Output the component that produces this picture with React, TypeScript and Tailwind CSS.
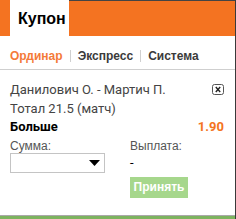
import React from "react";

const sans = "font-['Liberation_Sans',Arial,sans-serif]";
const roboto = "font-['Roboto','Liberation_Sans',sans-serif]";

function CloseIcon() {
  return (
    <svg width="12" height="11" viewBox="0 0 12 11" aria-label="Удалить">
      <rect x="0.5" y="0.5" width="11" height="10" rx="2" fill="none" stroke="#555" strokeWidth="1" />
      <path d="M3.8 3 L8.2 8 M8.2 3 L3.8 8" stroke="#222" strokeWidth="1.4" />
    </svg>
  );
}

function Tab({ label, active }: { label: string; active?: boolean }) {
  return (
    <span className={active ? "text-[#f47a38]" : "text-[#3b3b3b]"}>{label}</span>
  );
}

function Separator() {
  return <span className="mx-[7px] inline-block h-[12px] w-px bg-[#d0d0d0]" />;
}

export default function App() {
  return (
    <div className="flex h-[219px] w-[236px] flex-col border-r border-[#3a3a3a] bg-white">
      <header className="flex h-[36px] shrink-0 bg-[#f47321]">
        <div className="w-[10px]" />
        <div className={`${sans} w-[59px] bg-white pl-[8px] pt-[9px] text-[16px] font-bold leading-[20px] text-black`}>
          Купон
        </div>
        <div className="flex-1 border-t border-[#444]" />
      </header>

      <nav
        className={`${sans} flex h-[34px] shrink-0 items-center border-b border-[#cfcfcf] pl-[10px] pt-[6px] text-[12px] font-bold leading-[16px]`}
      >
        <Tab label="Ординар" active />
        <Separator />
        <Tab label="Экспресс" />
        <Separator />
        <Tab label="Система" />
      </nav>

      <section className="flex flex-1 flex-col pl-[10px] pr-[11px] pt-[10px]">
        <div className={`${roboto} flex h-[19px] items-center justify-between text-[13px] leading-[19px] text-[#444]`}>
          <span>Данилович О. - Мартич П.</span>
          <CloseIcon />
        </div>
        <div className={`${roboto} h-[19px] text-[13px] leading-[19px] text-[#444]`}>Тотал 21.5 (матч)</div>
        <div className={`${roboto} flex h-[18px] justify-between text-[13px] font-bold leading-[18px]`}>
          <span className="text-black">Больше</span>
          <span className="text-[#f47321]">1.90</span>
        </div>

        <div className="mt-[3px] flex gap-[25px]">
          <div className="w-[95px]">
            <div className={`${sans} text-[12px] leading-[14px] text-[#555]`}>Сумма:</div>
            <div className="flex h-[20px] items-center justify-end border border-[#c4c4c4] pr-[4px]">
              <svg width="11" height="6" viewBox="0 0 11 6">
                <path d="M0 0 H11 L5.5 6 Z" fill="#000" />
              </svg>
            </div>
          </div>
          <div>
            <div className={`${sans} text-[12px] leading-[14px] text-[#555]`}>Выплата:</div>
            <div className={`${roboto} h-[20px] text-[13px] leading-[20px] text-black`}>-</div>
            <button
              className={`${sans} mt-[1px] h-[21px] w-[58px] bg-[#a6d78c] text-[12px] font-bold leading-[21px] text-white`}
            >
              Принять
            </button>
          </div>
        </div>
      </section>

      <footer className="h-[4px] shrink-0 border-t border-[#a9a9a9] bg-[#7db35f]" />
    </div>
  );
}
